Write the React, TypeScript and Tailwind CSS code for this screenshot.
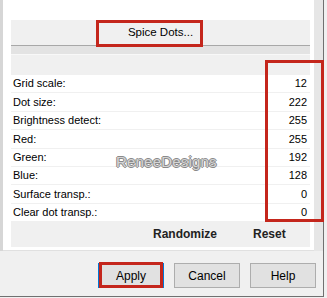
import React from "react";

const rows: [string, string][] = [
  ["Grid scale:", "12"],
  ["Dot size:", "222"],
  ["Brightness detect:", "255"],
  ["Red:", "255"],
  ["Green:", "192"],
  ["Blue:", "128"],
  ["Surface transp.:", "0"],
  ["Clear dot transp.:", "0"],
];

export default function App() {
  return (
    <div
      className="relative w-[327px] h-[298px] bg-[#f0f0f0] overflow-hidden text-black"
      style={{ fontFamily: '"Liberation Sans", Arial, sans-serif' }}
    >
      <div className="w-[324px] h-[297px] border-r border-b border-[#707070] flex flex-col">
        <div className="flex h-[251px]">
          <div className="w-[3px] bg-[#d6d6d6]" />
          <div className="w-[311px] bg-white pl-[8px] pt-[20px] border-b border-[#e0e0e0]">
            <div className="w-[299px] h-[227px] bg-[#f0f0f0] flex flex-col">
              <div className="h-[25px] flex items-center justify-center text-[11.5px]">
                Spice Dots...
              </div>
              <div className="h-[10px] bg-[#e3e3e3] border-t border-[#a8a8a8] border-b border-b-[#f8f8f8]" />
              <div className="h-[20px]" />
              <div className="flex flex-col gap-px">
                {rows.map(([label, value]) => (
                  <div
                    key={label}
                    className="h-[17.4px] bg-white flex items-center justify-between pl-[2px] pr-[3px] text-[11px]"
                  >
                    <span>{label}</span>
                    <span>{value}</span>
                  </div>
                ))}
              </div>
              <div className="flex-1 flex items-center text-[12px] font-bold text-[#222]">
                <span className="ml-[142px]">Randomize</span>
                <span className="ml-[36px]">Reset</span>
              </div>
            </div>
          </div>
          <div className="w-[9px] bg-[#e6e6e6]" />
        </div>
        <div className="flex-1 flex justify-end items-start pt-[12px] pr-[7px] gap-[10px] text-[12px]">
          <button className="w-[66px] h-[25px] bg-[#e1e1e1] border-2 border-[#0078d7] flex items-center justify-center">
            Apply
          </button>
          <button className="w-[66px] h-[25px] bg-[#e1e1e1] border border-[#adadad] flex items-center justify-center">
            Cancel
          </button>
          <button className="w-[66px] h-[25px] bg-[#e1e1e1] border border-[#adadad] flex items-center justify-center">
            Help
          </button>
        </div>
      </div>

      {/* watermark */}
      <div
        className="absolute left-[116px] top-[151px] text-[15px] text-[#d4d4d4] tracking-[0.2px]"
        style={{
          textShadow:
            "1px 0 0 #8a8a8a, -1px 0 0 #8a8a8a, 0 1px 0 #8a8a8a, 0 -1px 0 #8a8a8a",
        }}
      >
        ReneeDesigns
      </div>

      {/* red annotation boxes */}
      <div className="absolute left-[96px] top-[20px] w-[107px] h-[27px] border-[3px] border-[#c4261c]" />
      <div className="absolute left-[265px] top-[60px] w-[59px] h-[162px] border-[3px] border-[#c4261c]" />
      <div className="absolute left-[99px] top-[262px] w-[64px] h-[26px] border-[3px] border-[#c4261c]" />
    </div>
  );
}
